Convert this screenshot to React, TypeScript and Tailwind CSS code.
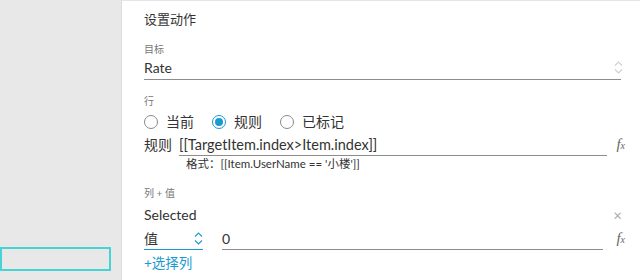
import React from "react";

function Spinner({ color }: { color: string }) {
  return (
    <svg width="9" height="13" viewBox="0 0 9 13" fill="none" stroke={color} strokeWidth="1.1">
      <path d="M1 4.5 L4.5 1 L8 4.5" />
      <path d="M1 8.5 L4.5 12 L8 8.5" />
    </svg>
  );
}

function Fx() {
  return (
    <span className="shrink-0 text-[15px] italic leading-none text-[#666]" style={{ fontFamily: '"Liberation Serif", serif' }}>
      f<span className="text-[10px]">x</span>
    </span>
  );
}

function Radio({ checked, label }: { checked?: boolean; label: string }) {
  return (
    <div className="flex items-center gap-[8px]">
      <div
        className={
          checked
            ? "flex h-[14px] w-[14px] items-center justify-center rounded-full border border-[#1a9ad0]"
            : "h-[14px] w-[14px] rounded-full border border-[#8a8a8a]"
        }
      >
        {checked && <div className="h-[8px] w-[8px] rounded-full bg-[#1a9ad0]" />}
      </div>
      <span className="text-[14px] leading-[20px] text-[#333]">{label}</span>
    </div>
  );
}

export default function App() {
  return (
    <div
      className="flex h-[280px] w-[640px] overflow-hidden bg-white"
      style={{ fontFamily: 'Lato, "Noto Sans CJK SC", sans-serif' }}
    >
      <div className="w-[122px] shrink-0 border-r border-[#dcdcdc] bg-[#e8e8e8] pt-[247px]">
        <div className="h-[24px] w-[111px] border-2 border-[#46d3d3]" />
      </div>
      <div className="flex flex-1 flex-col border-t border-[#e6e6e6] pl-[22px] pr-[19px] pt-[9px] text-[#333]">
        <div className="text-[13px] leading-[18px]">设置动作</div>
        <div className="mt-[14px] text-[10px] leading-[14px] text-[#777]">目标</div>
        <div className="flex h-[24px] items-center justify-between border-b border-[#8c8c8c]">
          <span className="text-[14px] leading-[20px]">Rate</span>
          <span className="mr-[-2px] flex"><Spinner color="#cfcfcf" /></span>
        </div>
        <div className="mt-[14px] text-[10px] leading-[14px] text-[#777]">行</div>
        <div className="mt-[4px] flex items-center gap-[18px]">
          <Radio label="当前" />
          <Radio checked label="规则" />
          <Radio label="已标记" />
        </div>
        <div className="mr-[-4px] mt-[3px] flex items-end">
          <span className="mr-[7px] pb-[1px] text-[14px] leading-[20px]">规则</span>
          <div className="flex-1 border-b border-[#8c8c8c] text-[14.5px] leading-[20px]">
            [[TargetItem.index&gt;Item.index]]
          </div>
          <div className="flex w-[18px] justify-end pb-[4px]"><Fx /></div>
        </div>
        <div className="mt-[1px] pl-[42px] text-[11.5px] leading-[14px]">格式：[[Item.UserName == '小楼']]</div>
        <div className="mt-[15px] text-[10px] leading-[14px] text-[#777]">列 + 值</div>
        <div className="mt-[5px] flex items-center justify-between">
          <span className="text-[14px] leading-[20px]">Selected</span>
          <span className="mr-[-1px] text-[15px] leading-[20px] text-[#aaa]">×</span>
        </div>
        <div className="mr-[-4px] mt-[2px] flex items-end">
          <div className="flex h-[23px] w-[59px] items-center justify-between border-b border-[#1a9ad0]">
            <span className="text-[14px]">值</span>
            <Spinner color="#1a9ad0" />
          </div>
          <div className="ml-[19px] flex h-[23px] flex-1 items-center border-b border-[#8c8c8c] text-[14px]">0</div>
          <div className="flex w-[22px] justify-end pb-[4px]"><Fx /></div>
        </div>
        <div className="mt-[3px] text-[13.5px] leading-[20px] text-[#1a9ad0]">+选择列</div>
      </div>
    </div>
  );
}
